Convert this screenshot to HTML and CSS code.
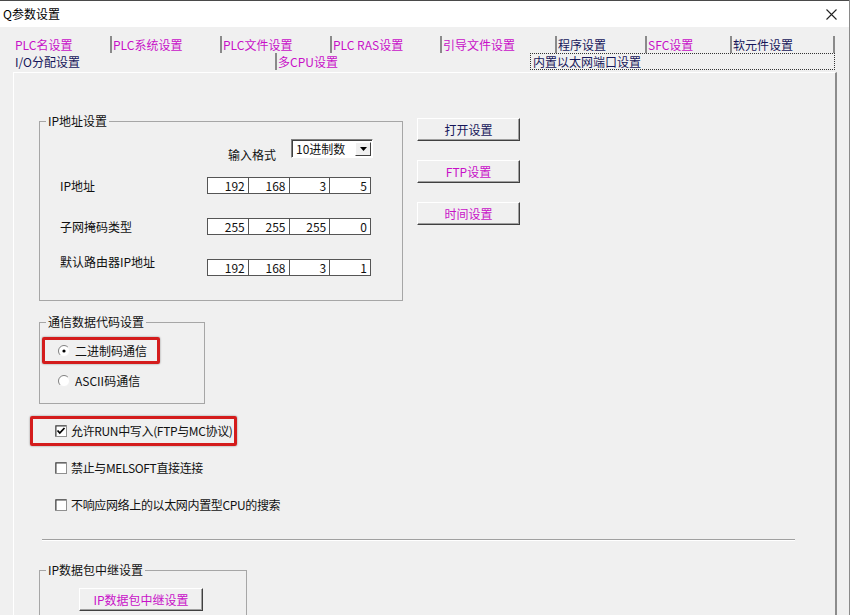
FILE: index.html
```html
<!DOCTYPE html>
<html lang="zh-CN">
<head>
  <meta charset="UTF-8">
  <title>Q参数设置</title>
  <link rel="stylesheet" href="styles.css">
</head>
<body>
<div class="window">

  <div class="titlebar">
    <span class="title">Q参数设置</span>
    <svg class="close" width="11" height="11" viewBox="0 0 11 11">
      <path d="M0.5 0.5 L10.5 10.5 M10.5 0.5 L0.5 10.5" stroke="#222" stroke-width="1.1" fill="none"/>
    </svg>
  </div>

  <div class="tabs">
    <div class="tab-row r1">
      <span class="tab first pink">PLC名设置</span>
      <span class="tab pink">PLC系统设置</span>
      <span class="tab pink">PLC文件设置</span>
      <span class="tab pink">PLC RAS设置</span>
      <span class="tab pink">引导文件设置</span>
      <span class="tab navy">程序设置</span>
      <span class="tab pink">SFC设置</span>
      <span class="tab last navy">软元件设置</span>
    </div>
    <div class="tab-row r2">
      <span class="tab first navy">I/O分配设置</span>
      <span class="tab pink">多CPU设置</span>
      <span class="tab selected navy">内置以太网端口设置</span>
    </div>
  </div>

  <div class="panel">

    <div class="top-area">
      <fieldset class="group ip-group">
        <legend>IP地址设置</legend>
        <div class="fmt-row">
          <span class="fmt-label">输入格式</span>
          <div class="select">
            <span>10进制数</span>
            <span class="drop">
              <svg width="7" height="4" viewBox="0 0 7 4"><path d="M0 0 H7 L3.5 4 Z" fill="#000"/></svg>
            </span>
          </div>
        </div>
        <div class="ip-row first-ip">
          <span class="ip-label">IP地址</span>
          <div class="ip-box"><span>192</span><span>168</span><span>3</span><span>5</span></div>
        </div>
        <div class="ip-row">
          <span class="ip-label">子网掩码类型</span>
          <div class="ip-box"><span>255</span><span>255</span><span>255</span><span>0</span></div>
        </div>
        <div class="ip-row">
          <span class="ip-label raised">默认路由器IP地址</span>
          <div class="ip-box"><span>192</span><span>168</span><span>3</span><span>1</span></div>
        </div>
      </fieldset>

      <div class="btn-col">
        <button class="btn navy">打开设置</button>
        <button class="btn pink">FTP设置</button>
        <button class="btn pink">时间设置</button>
      </div>
    </div>

    <fieldset class="group code-group">
      <legend>通信数据代码设置</legend>
      <div class="opt radio-first">
        <svg class="radio" width="12" height="12" viewBox="0 0 12 12">
          <circle cx="6" cy="6" r="5.5" fill="#fff"/>
          <path d="M2.1 9.9 A5.5 5.5 0 0 1 9.9 2.1" stroke="#808080" stroke-width="1" fill="none"/>
          <path d="M9.9 2.1 A5.5 5.5 0 0 1 2.1 9.9" stroke="#f0f0f0" stroke-width="1" fill="none"/>
          <circle cx="6" cy="6" r="1.6" fill="#000"/>
        </svg>
        <span>二进制码通信</span>
        <div class="mark mark-radio"></div>
      </div>
      <div class="opt radio-second">
        <svg class="radio" width="12" height="12" viewBox="0 0 12 12">
          <circle cx="6" cy="6" r="5.5" fill="#fff"/>
          <path d="M2.1 9.9 A5.5 5.5 0 0 1 9.9 2.1" stroke="#808080" stroke-width="1" fill="none"/>
          <path d="M9.9 2.1 A5.5 5.5 0 0 1 2.1 9.9" stroke="#f0f0f0" stroke-width="1" fill="none"/>
        </svg>
        <span>ASCII码通信</span>
      </div>
    </fieldset>

    <div class="checks">
      <div class="opt">
        <svg class="check" width="12" height="12" viewBox="0 0 12 12">
          <rect x="0.5" y="0.5" width="11" height="11" fill="#fff" stroke="#909090"/>
          <path d="M1 11 V1 H11" stroke="#404040" fill="none"/>
          <path d="M2.5 5.5 L4.8 8 L9.5 3" stroke="#000" stroke-width="1.8" fill="none"/>
        </svg>
        <span>允许RUN中写入(FTP与MC协议)</span>
        <div class="mark mark-check"></div>
      </div>
      <div class="opt">
        <svg class="check" width="12" height="12" viewBox="0 0 12 12">
          <rect x="0.5" y="0.5" width="11" height="11" fill="#fff" stroke="#909090"/>
          <path d="M1 11 V1 H11" stroke="#404040" fill="none"/>
        </svg>
        <span>禁止与MELSOFT直接连接</span>
      </div>
      <div class="opt">
        <svg class="check" width="12" height="12" viewBox="0 0 12 12">
          <rect x="0.5" y="0.5" width="11" height="11" fill="#fff" stroke="#909090"/>
          <path d="M1 11 V1 H11" stroke="#404040" fill="none"/>
        </svg>
        <span>不响应网络上的以太网内置型CPU的搜索</span>
      </div>
    </div>

    <div class="sep"></div>

    <fieldset class="group relay-group">
      <legend>IP数据包中继设置</legend>
      <button class="btn pink relay-btn">IP数据包中继设置</button>
    </fieldset>

  </div>
</div>
</body>
</html>
```

FILE: styles.css
```css
* { box-sizing: border-box; }
html, body { margin: 0; padding: 0; }
body { background: #f0f0f0; font-family: "Noto Sans CJK SC", "Liberation Sans", sans-serif; font-size: 12px; color: #111; }

.window { width: 850px; height: 615px; overflow: hidden; background: #f0f0f0; border-right: 1px solid #8a8a8a; position: relative; }

.titlebar { height: 27px; background: #fff; border-top: 1px solid #4a4a4a; display: flex; align-items: center; justify-content: space-between; padding: 0 12px 0 3px; }
.title { font-size: 12px; line-height: 14px; color: #000; }

.pink { color: #c810c8; }
.navy { color: #16165a; }

.tabs { margin-left: 13px; padding-top: 9px; }
.tab-row { display: grid; height: 17px; }
.tab-row.r1 { grid-template-columns: 97px 110px 110px 110px 115px 90px 85px 105px; }
.tab-row.r2 { grid-template-columns: 262px 255px 305px; }
.tab { border-left: 2px solid #8a8a8a; padding-left: 1px; line-height: 17px; white-space: nowrap; }
.tab.first { border-left: none; padding-left: 2px; }
.tab.last { border-right: 2px solid #8a8a8a; }
.tab.selected { border: 1px dotted #333; padding-left: 2px; line-height: 15px; }

.panel { margin-left: 13px; margin-top: 2px; width: 824px; height: 560px; border-top: 1px solid #fff; border-left: 1px solid #fff; border-right: 2px solid #8c8c8c; padding-top: 41px; }

.group { margin: 0; padding: 0; border: 1px solid #a6a6a6; min-width: 0; }
.group legend { margin-left: 6px; padding: 0 2px; line-height: 14px; font-size: 12px; color: #111; }

.top-area { display: flex; margin-left: 25px; }
.ip-group { width: 364px; height: 187px; }

.fmt-row { display: flex; align-items: flex-start; margin-top: 11px; margin-left: 188px; height: 19px; }
.fmt-label { width: 63px; padding-top: 9px; line-height: 14px; }
.select { width: 82px; height: 19px; background: #fff; border: 1px solid; border-color: #808080 #fff #fff #808080; box-shadow: inset 1px 1px 0 #404040; display: flex; align-items: center; justify-content: space-between; padding: 0 1px 0 4px; line-height: 14px; }
.drop { width: 16px; height: 14px; background: #f0f0f0; border: 1px solid; border-color: #fff #404040 #404040 #fff; display: flex; align-items: center; justify-content: center; }

.ip-row { display: flex; align-items: center; padding-left: 20px; margin-top: 24px; height: 17px; }
.ip-row.first-ip { margin-top: 19px; }
.ip-label { width: 147px; line-height: 14px; }
.ip-label.raised { align-self: flex-start; margin-top: -4px; }
.ip-box { display: flex; width: 164px; height: 17px; background: #fff; border: 1px solid #555; }
.ip-box span { flex: 1; text-align: right; padding-right: 3px; line-height: 15px; border-right: 1px solid #555; }
.ip-box span:last-child { border-right: none; }

.btn-col { display: flex; flex-direction: column; margin-left: 14px; padding-top: 4px; gap: 19px; }
.btn { width: 103px; height: 23px; margin: 0; padding: 0; font-family: inherit; font-size: 12px; line-height: 14px; background: #f0f0f0; border: 1px solid; border-color: #fff #404040 #404040 #fff; box-shadow: inset -1px -1px 0 #a0a0a0; }

.code-group { width: 166px; height: 89px; margin-top: 14px; margin-left: 25px; }
.opt { position: relative; display: flex; align-items: center; height: 16px; }
.opt span { line-height: 14px; }
.code-group .opt { margin-left: 18px; gap: 5px; }
.radio-first { margin-top: 14px; }
.radio-second { margin-top: 14px; }

.checks { margin-left: 41px; margin-top: 19px; display: flex; flex-direction: column; gap: 21px; }
.checks .opt { gap: 4px; }
.checks .opt span { letter-spacing: -0.35px; }

.mark { position: absolute; border: 3px solid #d41c1c; border-radius: 2px; box-shadow: 0 0 2px rgba(0, 0, 0, 0.45); }
.mark-radio { left: -16px; top: -6px; width: 118px; height: 27px; }
.mark-check { left: -25px; top: -7px; width: 207px; height: 30px; }

.sep { margin-top: 26px; margin-left: 28px; width: 753px; height: 2px; border-top: 1px solid #a0a0a0; border-bottom: 1px solid #fff; }

.relay-group { width: 208px; height: 70px; margin-top: 22px; margin-left: 25px; }
.relay-btn { width: 124px; margin-top: 11px; margin-left: 39px; }
```
